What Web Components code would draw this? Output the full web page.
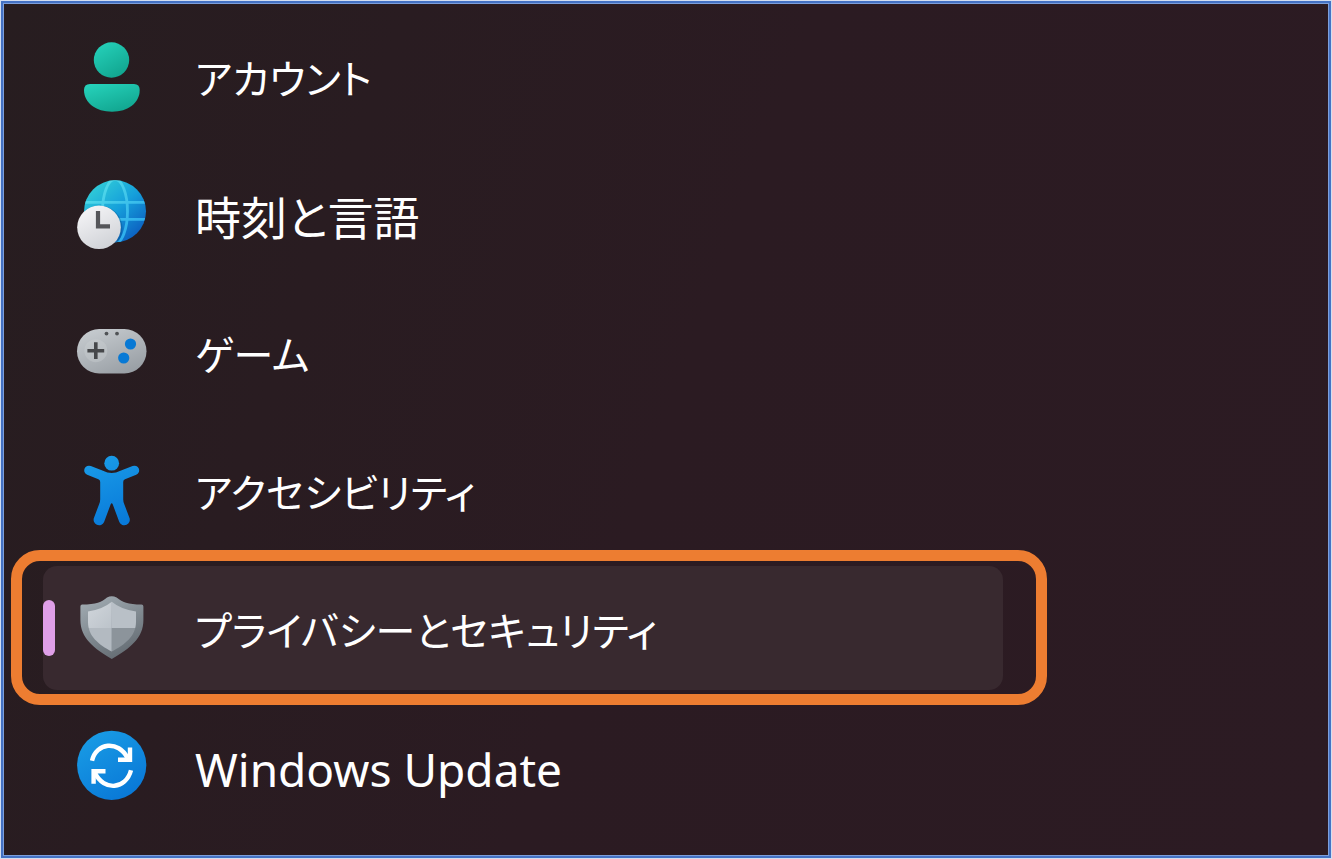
<!DOCTYPE html>
<html lang="ja">
<head>
<meta charset="utf-8">
<meta name="viewport" content="width=device-width, initial-scale=1">
<title>設定</title>
<style>
  body { margin: 0; background: #2b1b22; }
</style>
</head>
<body>
<settings-panel>
  <nav-item href="#accounts" kana><nav-icon slot="icon" name="account"></nav-icon>アカウント</nav-item>
  <nav-item href="#time"><nav-icon slot="icon" name="time"></nav-icon>時刻と言語</nav-item>
  <nav-item href="#gaming" kana><nav-icon slot="icon" name="game"></nav-icon>ゲーム</nav-item>
  <nav-item href="#accessibility" kana><nav-icon slot="icon" name="person"></nav-icon>アクセシビリティ</nav-item>
  <nav-item href="#privacy" kana selected><nav-icon slot="icon" name="shield"></nav-icon>プライバシーとセキュリティ</nav-item>
  <nav-item href="#update"><nav-icon slot="icon" name="update"></nav-icon>Windows Update</nav-item>
</settings-panel>

<script>
class SettingsPanel extends HTMLElement {
  constructor() {
    super();
    this.attachShadow({ mode: 'open' }).innerHTML = `
      <style>
        :host {
          display: block;
          box-sizing: border-box;
          min-height: 100vh;
          padding: 13px 42px;
          border: 1px solid #d3def1;
          background: linear-gradient(110deg, #271d20 0%, #2b1b22 50%, #2c1b23 100%);
          box-shadow: inset 0 0 0 2px #4472c4, inset 0 0 0 3px #7d9fdb;
          color: #fff;
          font-family: "Noto Sans", "Noto Sans CJK JP", sans-serif;
        }
        nav { display: flex; flex-direction: column; gap: 14px; max-width: 960px; }
      </style>
      <nav aria-label="設定"><slot></slot></nav>`;
  }
}

class NavItem extends HTMLElement {
  constructor() {
    super();
    this.attachShadow({ mode: 'open' }).innerHTML = `
      <style>
        :host { display: block; position: relative; }
        a {
          display: flex;
          align-items: center;
          gap: 47px;
          box-sizing: border-box;
          height: 124px;
          padding: 0 33px;
          border-radius: 14px;
          color: inherit;
          text-decoration: none;
          white-space: nowrap;
        }
        .label {
          font-size: 46px;
          line-height: 64px;
          padding-top: 6px;
          font-feature-settings: "palt";
        }
        :host([kana]) .label { font-size: 40px; }
        :host([selected]) a { background: #38292f; }
        :host([selected]) a::before {
          content: "";
          position: absolute;
          left: 0;
          top: 34px;
          width: 12px;
          height: 56px;
          border-radius: 6px;
          background: #df9fe8;
        }
        :host([selected])::after {
          content: "";
          position: absolute;
          inset: -16px -44px -15px -32px;
          border: 11px solid #ed7d31;
          border-radius: 29px;
          pointer-events: none;
        }
      </style>
      <a><slot name="icon"></slot><span class="label"><slot></slot></span></a>`;
  }
  connectedCallback() {
    const link = this.shadowRoot.querySelector('a');
    link.href = this.getAttribute('href');
    if (this.hasAttribute('selected')) link.setAttribute('aria-current', 'page');
  }
}

const ICONS = {
  account: `
    <defs><linearGradient id="g" x1="0" y1="0" x2=".6" y2="1"><stop offset="0" stop-color="#27d4bd"/><stop offset="1" stop-color="#12a791"/></linearGradient></defs>
    <circle cx="35.5" cy="20" r="17.7" fill="url(#g)"/>
    <path d="M14 44H58Q63.7 44 63.7 50C63.7 63 52 71.7 36 71.7S8 63 8 50Q8 44 14 44Z" fill="url(#g)"/>`,
  time: `
    <defs>
      <linearGradient id="g" x1=".15" y1=".1" x2=".85" y2=".9"><stop offset="0" stop-color="#30cbd8"/><stop offset=".5" stop-color="#159fdb"/><stop offset="1" stop-color="#0c5fc0"/></linearGradient>
      <linearGradient id="l" gradientUnits="userSpaceOnUse" x1="14" y1="8" x2="64" y2="60"><stop offset="0" stop-color="#55e0e8"/><stop offset="1" stop-color="#27a5ed"/></linearGradient>
      <linearGradient id="w" x1=".2" y1="0" x2=".7" y2="1"><stop offset="0" stop-color="#f6f6f8"/><stop offset="1" stop-color="#cfd1d6"/></linearGradient>
      <clipPath id="c"><circle cx="39" cy="33.3" r="31"/></clipPath>
    </defs>
    <circle cx="39" cy="33.3" r="31" fill="url(#g)"/>
    <g clip-path="url(#c)" fill="none" stroke="url(#l)" stroke-width="2.8">
      <ellipse cx="39" cy="33.3" rx="12.5" ry="32"/><path d="M6 24.3H72M6 41.3H72"/>
    </g>
    <g clip-path="url(#c)"><circle cx="23.5" cy="50.5" r="23" fill="#073d70" opacity=".3"/></g>
    <circle cx="23" cy="49.3" r="21.8" fill="url(#w)"/>
    <path d="M22 33V48.3H34" fill="none" stroke="#55565a" stroke-width="4.2"/>`,
  game: `
    <defs>
      <linearGradient id="g" x1=".2" y1="0" x2=".8" y2="1"><stop offset="0" stop-color="#c6cbcf"/><stop offset="1" stop-color="#979da3"/></linearGradient>
    </defs>
    <rect x="1" y="13" width="69.5" height="44.5" rx="22.2" fill="url(#g)"/>
    <circle cx="19.8" cy="34.7" r="11.5" fill="#cbd0d3" opacity=".4"/>
    <path d="M19.8 26.3V43.1M11.4 34.7H28.2" stroke="#46484b" stroke-width="3.6"/>
    <circle cx="54.5" cy="28" r="5.6" fill="#0879d5"/><circle cx="47.7" cy="42" r="5.6" fill="#0879d5"/>
    <circle cx="30.5" cy="17.6" r="1.9" fill="#505356"/><circle cx="41" cy="17.6" r="1.9" fill="#505356"/>`,
  person: `
    <defs><linearGradient id="g" gradientUnits="userSpaceOnUse" x1="20" y1="2" x2="48" y2="70"><stop offset="0" stop-color="#1a9ce8"/><stop offset="1" stop-color="#0879d9"/></linearGradient></defs>
    <circle cx="35.7" cy="9.2" r="7.4" fill="url(#g)"/>
    <path fill="url(#g)" d="M14.8 12L27 16.8Q35.7 21.4 44.4 16.8L56.6 12A4.6 4.6 0 0 1 60.2 20.8L49 25.2Q47.2 26 47.2 28V45.2Q47.2 47.5 48.2 50L53.3 63.5A5.4 5.4 0 0 1 43.3 68L36.8 50.5Q35.7 48 34.6 50.5L28.1 68A5.4 5.4 0 0 1 18.1 63.5L23.2 50Q24.2 47.5 24.2 45.2V28Q24.2 26 22.4 25.2L11.2 20.8A4.6 4.6 0 0 1 14.8 12Z"/>`,
  shield: `
    <defs>
      <linearGradient id="g" x1=".2" y1="0" x2=".7" y2="1"><stop offset="0" stop-color="#a0aab1"/><stop offset="1" stop-color="#626a71"/></linearGradient>
      <clipPath id="c"><path d="M35.8 9.8Q45 17.5 60 19.5V30C60 44 49 52.5 35.8 59.5C22.5 52.5 12 44 12 30V19.5Q26.5 17.5 35.8 9.8Z"/></clipPath>
      <linearGradient id="a" x1="0" y1="0" x2="1" y2="1"><stop offset="0" stop-color="#d4d9de"/><stop offset="1" stop-color="#bcc3ca"/></linearGradient>
    </defs>
    <path d="M31 5.5Q35.8 2.8 40.6 5.5C46 10 52 12.6 65.5 12.6Q67.4 12.6 67.4 14.5V28C67.4 46 54 56.5 35.8 67C18 56.5 4.4 46 4.4 28V14.5Q4.4 12.6 6.2 12.6C20 12.6 26 10 31 5.5Z" fill="url(#g)"/>
    <g clip-path="url(#c)">
      <path d="M8 6H35.8V36H8Z" fill="url(#a)"/><path d="M35.8 6H64V36H35.8Z" fill="#b9c0c7"/>
      <path d="M8 36H35.8V62H8Z" fill="#b3bac1"/><path d="M35.8 36H64V62H35.8Z" fill="#8c949b"/>
    </g>`,
  update: `
    <defs><linearGradient id="g" x1=".2" y1="0" x2=".8" y2="1"><stop offset="0" stop-color="#199ce5"/><stop offset="1" stop-color="#0876d6"/></linearGradient></defs>
    <circle cx="35.7" cy="35.3" r="34.6" fill="url(#g)"/>
    <g fill="none" stroke="#fff" stroke-width="4.4">
      <path d="M16 30.8C20 12.5 42.5 10 51.5 28"/><path d="M54 17.5V29.8H42"/>
      <path d="M55 40.3C50 59.5 28 61.5 19 43"/><path d="M17.6 53.8V41.2H29.5"/>
    </g>`
};

class NavIcon extends HTMLElement {
  constructor() {
    super();
    this.attachShadow({ mode: 'open' });
  }
  connectedCallback() {
    this.shadowRoot.innerHTML = `
      <style>
        :host { display: block; flex: none; width: 72px; height: 72px; }
        svg { display: block; width: 100%; height: 100%; overflow: visible; }
      </style>
      <svg viewBox="0 0 72 72" aria-hidden="true">${ICONS[this.getAttribute('name')]}</svg>`;
  }
}

customElements.define('nav-icon', NavIcon);
customElements.define('nav-item', NavItem);
customElements.define('settings-panel', SettingsPanel);
</script>
</body>
</html>
